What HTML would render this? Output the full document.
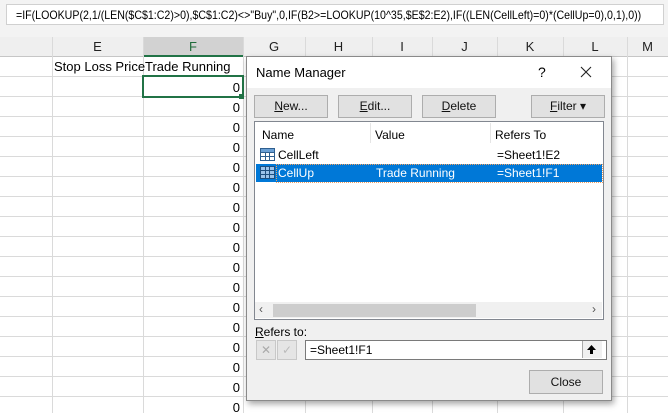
<!DOCTYPE html><html><head><style>
body{margin:0;width:668px;height:413px;overflow:hidden;background:#fff;font-family:"Liberation Sans",sans-serif;position:relative}
.a{position:absolute}
.fb{left:0;top:0;width:668px;height:37px;background:#f3f3f3;border-bottom:1px solid #d4d4d4}
.fbox{left:6px;top:4px;width:658px;height:21px;background:#fff;border:1px solid #d0d0d0;box-sizing:border-box;overflow:hidden}
.ft{left:9px;top:0;font-size:12px;line-height:20px;white-space:nowrap;transform-origin:0 0;transform:scaleX(0.885)}
.hdr{top:37px;height:19px;background:#efefef;border-bottom:1px solid #c6c6c6;font-size:13px;text-align:center;line-height:20px;color:#222}
.vl{width:1px;background:#dadada;top:37px;height:376px}
.hl{left:0;width:668px;height:1px;background:#dadada}
.z{font-size:13px;text-align:right;width:97px;left:143px}
.dlg{left:246px;top:56px;width:364px;height:343px;background:#f0f0f0;border:1px solid #8a8a8a;box-shadow:2px 3px 6px rgba(0,0,0,.35);font-size:12px}
.btn{background:#e1e1e1;border:1px solid #adadad;text-align:center;line-height:21px;height:21px;box-sizing:content-box;color:#111}
</style></head><body>
<div class="a fb"></div>
<div class="a fbox"><div class="a ft">=IF(LOOKUP(2,1/(LEN($C$1:C2)&gt;0),$C$1:C2)&lt;&gt;"Buy",0,IF(B2&gt;=LOOKUP(10^35,$E$2:E2),IF((LEN(CellLeft)=0)*(CellUp=0),0,1),0))</div></div>
<div class="a hdr" style="left:0;width:52px"></div>
<div class="a hdr" style="left:52px;width:91px">E</div>
<div class="a hdr" style="left:143px;width:100px;background:#d2d2d2;color:#1e6b3a;border-bottom:2px solid #217346;height:18px">F</div>
<div class="a hdr" style="left:243px;width:62px">G</div>
<div class="a hdr" style="left:305px;width:67px">H</div>
<div class="a hdr" style="left:372px;width:60px">I</div>
<div class="a hdr" style="left:432px;width:65px">J</div>
<div class="a hdr" style="left:497px;width:66px">K</div>
<div class="a hdr" style="left:563px;width:64px">L</div>
<div class="a hdr" style="left:627px;width:41px">M</div>
<div class="a vl" style="left:52px"></div><div class="a vl" style="left:143px"></div><div class="a vl" style="left:243px"></div><div class="a vl" style="left:305px"></div><div class="a vl" style="left:372px"></div><div class="a vl" style="left:432px"></div><div class="a vl" style="left:497px"></div><div class="a vl" style="left:563px"></div><div class="a vl" style="left:627px"></div>
<div class="a hl" style="top:76px"></div><div class="a hl" style="top:96px"></div><div class="a hl" style="top:116px"></div><div class="a hl" style="top:136px"></div><div class="a hl" style="top:156px"></div><div class="a hl" style="top:176px"></div><div class="a hl" style="top:196px"></div><div class="a hl" style="top:216px"></div><div class="a hl" style="top:236px"></div><div class="a hl" style="top:256px"></div><div class="a hl" style="top:276px"></div><div class="a hl" style="top:296px"></div><div class="a hl" style="top:316px"></div><div class="a hl" style="top:336px"></div><div class="a hl" style="top:356px"></div><div class="a hl" style="top:376px"></div><div class="a hl" style="top:396px"></div>
<div class="a" style="left:54px;top:59px;font-size:13px;white-space:nowrap">Stop Loss Price</div>
<div class="a" style="left:145px;top:59px;font-size:13px;white-space:nowrap">Trade Running</div>
<div class="a" style="left:142px;top:75px;width:98px;height:19px;border:2px solid #217346"></div>
<div class="a" style="left:239px;top:94px;width:5px;height:5px;background:#217346"></div>
<div class="a z" style="top:80px">0</div><div class="a z" style="top:100px">0</div><div class="a z" style="top:120px">0</div><div class="a z" style="top:140px">0</div><div class="a z" style="top:160px">0</div><div class="a z" style="top:180px">0</div><div class="a z" style="top:200px">0</div><div class="a z" style="top:220px">0</div><div class="a z" style="top:240px">0</div><div class="a z" style="top:260px">0</div><div class="a z" style="top:280px">0</div><div class="a z" style="top:300px">0</div><div class="a z" style="top:320px">0</div><div class="a z" style="top:340px">0</div><div class="a z" style="top:360px">0</div><div class="a z" style="top:380px">0</div><div class="a z" style="top:400px">0</div>
<div class="a dlg">
 <div class="a" style="left:0;top:0;width:364px;height:31px;background:#fff"></div>
 <div class="a" style="left:9px;top:8px;font-size:13px">Name Manager</div>
 <div class="a" style="left:291px;top:7px;font-size:14px">?</div>
 <svg class="a" style="left:333px;top:9px" width="12" height="12"><path d="M1 1L11 11M11 1L1 11" stroke="#222" stroke-width="1.1"/></svg>
 <div class="a btn" style="left:7px;top:38px;width:72px"><u>N</u>ew...</div>
 <div class="a btn" style="left:91px;top:38px;width:72px"><u>E</u>dit...</div>
 <div class="a btn" style="left:175px;top:38px;width:72px"><u>D</u>elete</div>
 <div class="a btn" style="left:284px;top:38px;width:72px"><u>F</u>ilter ▾</div>
 <div class="a" style="left:7px;top:64px;width:348px;height:197px;background:#fff;border:1px solid #828790"></div>
 <div class="a" style="left:15px;top:71px">Name</div><div class="a" style="left:128px;top:71px">Value</div><div class="a" style="left:248px;top:71px">Refers To</div>
 <div class="a" style="left:123px;top:66px;width:1px;height:20px;background:#e5e5e5"></div><div class="a" style="left:243px;top:66px;width:1px;height:20px;background:#e5e5e5"></div>
 <svg class="a" style="left:13px;top:91px" width="15" height="13"><rect x=".5" y=".5" width="14" height="12" fill="#fff" stroke="#2f5f8f"/><path d="M1 4.5h13M1 8.5h13M5.5 1v12M9.5 1v12" stroke="#2f5f8f"/><rect x="1" y="1" width="13" height="3" fill="#6a9fd4"/></svg>
 <div class="a" style="left:31px;top:91px">CellLeft</div><div class="a" style="left:250px;top:91px">=Sheet1!E2</div>
 <div class="a" style="left:9px;top:107px;width:346px;height:18px;background:#0078d7"></div>
 <div class="a" style="left:29px;top:107px;width:325px;height:17px;border:1px dotted #f0a060"></div>
 <svg class="a" style="left:13px;top:109px" width="15" height="13"><rect x=".5" y=".5" width="14" height="12" fill="#9cc3ea" stroke="#1f4f7f"/><path d="M1 4.5h13M1 8.5h13M5.5 1v12M9.5 1v12" stroke="#1f4f7f"/></svg>
 <div class="a" style="left:31px;top:109px;color:#fff">CellUp</div><div class="a" style="left:129px;top:109px;color:#fff">Trade Running</div><div class="a" style="left:250px;top:109px;color:#fff">=Sheet1!F1</div>
 <div class="a" style="left:8px;top:245px;width:347px;height:16px;background:#f0f0f0"></div>
 <div class="a" style="left:26px;top:247px;width:203px;height:13px;background:#cdcdcd"></div>
 <div class="a" style="left:12px;top:245px;color:#555">‹</div><div class="a" style="left:345px;top:245px;color:#555">›</div>
 <div class="a" style="left:8px;top:268px"><u>R</u>efers to:</div>
 <div class="a" style="left:9px;top:283px;width:18px;height:18px;border:1px solid #c8c8c8;background:#e5e5e5;color:#aaa;text-align:center;line-height:18px">✕</div>
 <div class="a" style="left:30px;top:283px;width:18px;height:18px;border:1px solid #c8c8c8;background:#e5e5e5;color:#bbb;text-align:center;line-height:18px">✓</div>
 <div class="a" style="left:58px;top:283px;width:296px;height:18px;background:#fff;border:1px solid #7a7a7a;line-height:18px;padding-left:4px;box-sizing:content-box">=Sheet1!F1</div>
 <div class="a" style="left:335px;top:284px;width:19px;height:17px;background:#f0f0f0;border-left:1px solid #aaa"></div>
 <svg class="a" style="left:339px;top:287px" width="11" height="11"><path d="M5.5 1L1 6h3v4h3V6h3z" fill="#000"/></svg>
 <div class="a btn" style="left:282px;top:313px;width:72px;height:22px;line-height:22px">Close</div>
</div>
</body></html>
